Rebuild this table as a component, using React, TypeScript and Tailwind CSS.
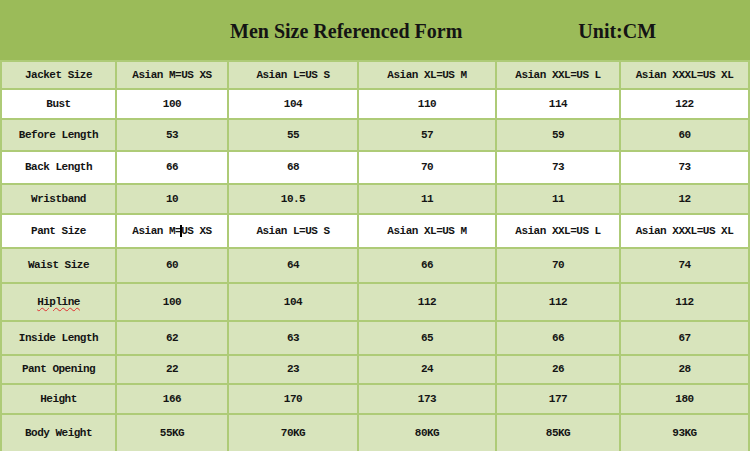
import React from "react";

const rows: { cells: string[]; h: string; white?: boolean }[] = [
  { cells: ["Jacket Size", "Asian M=US XS", "Asian L=US S", "Asian XL=US M", "Asian XXL=US L", "Asian XXXL=US XL"], h: "h-[26px]" },
  { cells: ["Bust", "100", "104", "110", "114", "122"], h: "h-[28px]", white: true },
  { cells: ["Before Length", "53", "55", "57", "59", "60"], h: "h-[30px]" },
  { cells: ["Back Length", "66", "68", "70", "73", "73"], h: "h-[31px]", white: true },
  { cells: ["Wristband", "10", "10.5", "11", "11", "12"], h: "h-[28px]" },
  { cells: ["Pant Size", "Asian M=US XS", "Asian L=US S", "Asian XL=US M", "Asian XXL=US L", "Asian XXXL=US XL"], h: "h-[32px]", white: true },
  { cells: ["Waist Size", "60", "64", "66", "70", "74"], h: "h-[33px]" },
  { cells: ["Hipline", "100", "104", "112", "112", "112"], h: "h-[36px]" },
  { cells: ["Inside Length", "62", "63", "65", "66", "67"], h: "h-[32px]" },
  { cells: ["Pant Opening", "22", "23", "24", "26", "28"], h: "h-[27px]" },
  { cells: ["Height", "166", "170", "173", "177", "180"], h: "h-[28px]" },
  { cells: ["Body Weight", "55KG", "70KG", "80KG", "85KG", "93KG"], h: "h-[36px]" },
];

export default function App() {
  return (
    <div className="w-[750px] h-[451px] overflow-hidden bg-[#9bbb59] text-[#141414] [font-family:'Liberation_Mono',monospace]">
      <div className="h-[60px] flex items-center pl-[230px] pt-[2px] [font-family:'Liberation_Serif',serif]">
        <span className="text-[20px] font-bold">Men Size Referenced Form</span>
        <span className="ml-[116px] text-[20px] font-bold">Unit:CM</span>
      </div>
      <div className="grid grid-cols-[113px_110px_128px_136px_122px_127px] gap-[2px] p-[2px] pb-0 bg-[#aecb77]">
        {rows.map((r, ri) =>
          r.cells.map((c, ci) => (
            <div
              key={ri + "-" + ci}
              className={`${r.h} ${r.white ? "bg-white" : "bg-[#d8e4bc]"} flex items-center justify-center text-[11px] tracking-[-0.5px] ${ci === 0 ? "font-bold" : "font-semibold"} whitespace-nowrap`}
            >
              {ri === 7 && ci === 0 ? (
                <span className="underline decoration-wavy decoration-[#e03030] decoration-1 underline-offset-2">{c}</span>
              ) : ri === 5 && ci === 1 ? (
                <span>
                  Asian M=<span className="inline-block w-[2px] h-[12px] bg-black align-middle -mx-[1px]"></span>US XS
                </span>
              ) : (
                c
              )}
            </div>
          ))
        )}
      </div>
    </div>
  );
}
